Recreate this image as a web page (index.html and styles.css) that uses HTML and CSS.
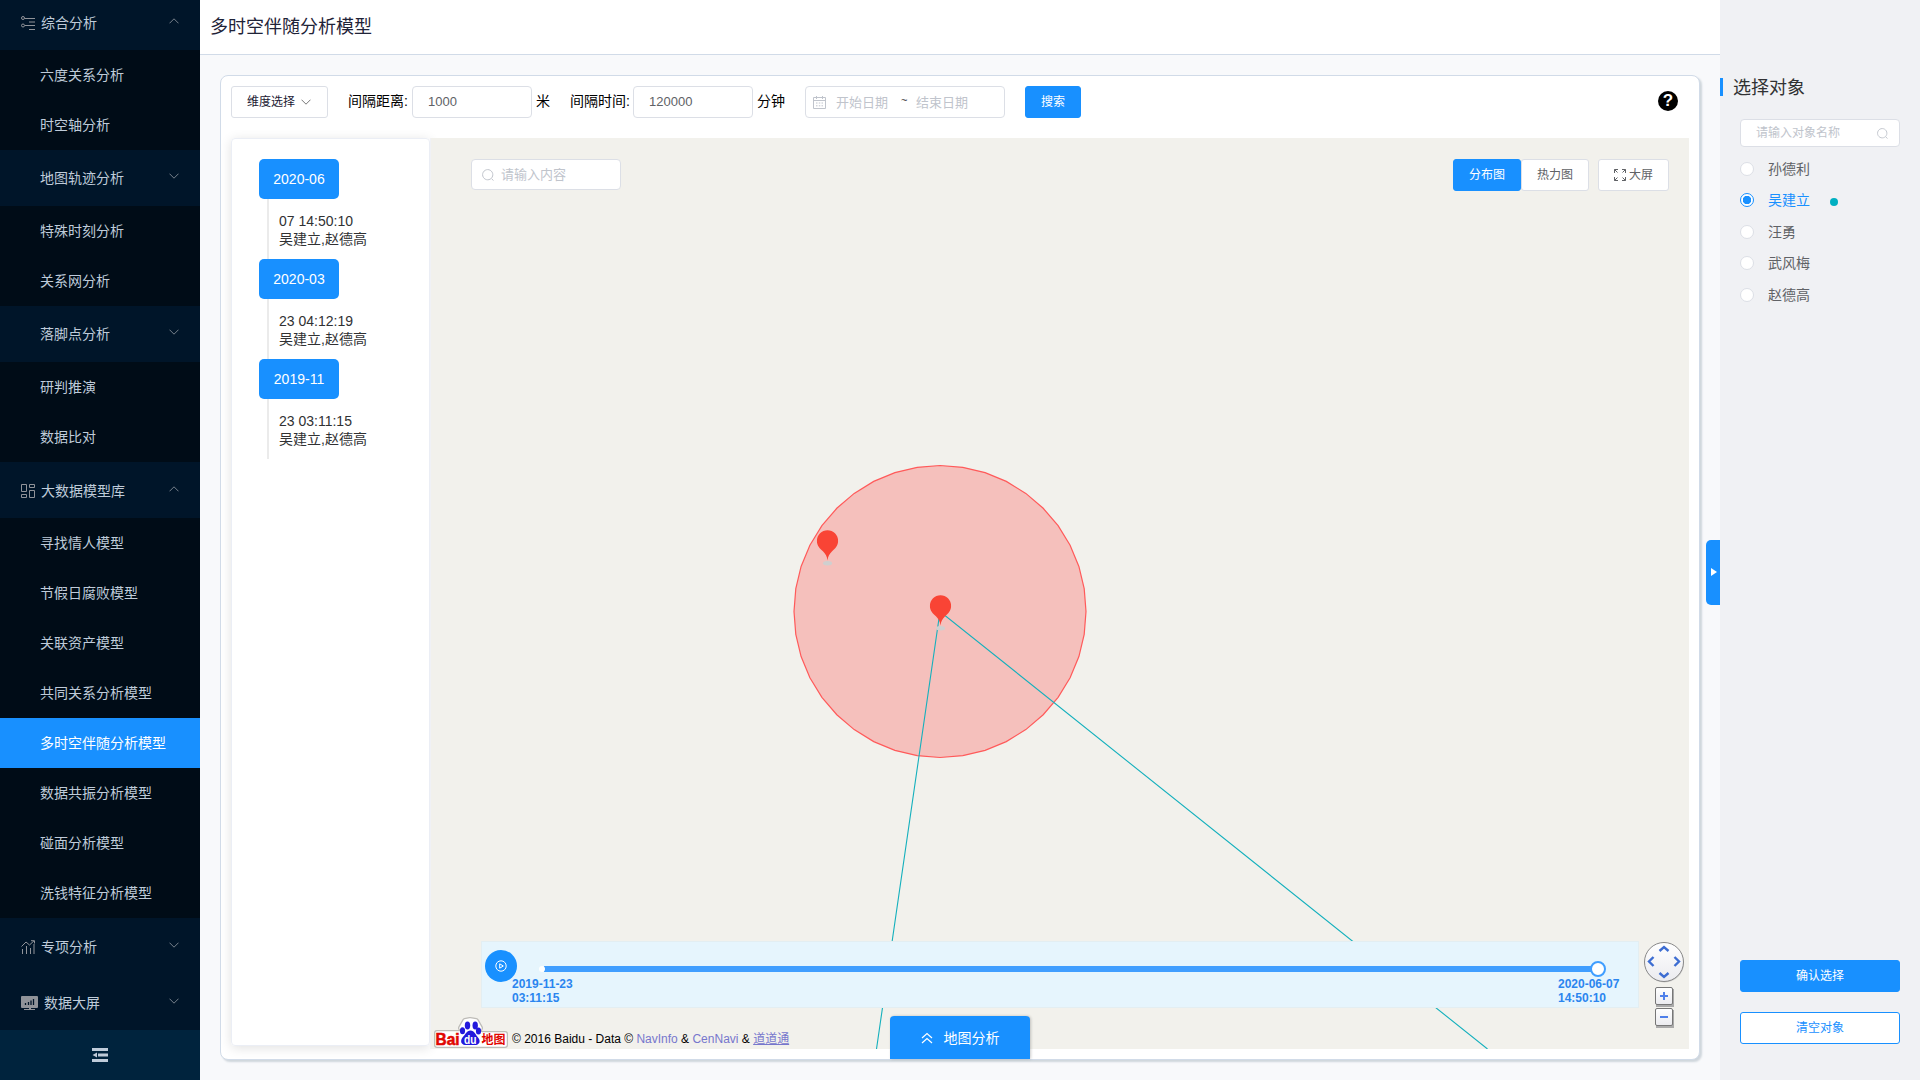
FILE: index.html
```html
<!DOCTYPE html>
<html lang="zh-CN">
<head>
<meta charset="utf-8">
<title>多时空伴随分析模型</title>
<link rel="stylesheet" href="styles.css">
</head>
<body>
<svg width="0" height="0" class="defs">
  <defs>
    <symbol id="down" viewBox="0 0 10 6"><path d="M.5.7 5 5.2 9.5.7" fill="none" stroke="currentColor"/></symbol>
    <symbol id="up" viewBox="0 0 10 6"><path d="M.5 5.3 5 .8 9.5 5.3" fill="none" stroke="currentColor"/></symbol>
    <symbol id="search" viewBox="0 0 12 12"><path d="M9.6 9.6 11.4 11.6M5.7.6a5.1 5.1 0 1 0 .01 0z" fill="none" stroke="currentColor" stroke-width="1"/></symbol>
    <symbol id="pin" viewBox="0 0 22 36"><ellipse cx="11" cy="33.2" rx="4.5" ry="2.2" fill="#d0cfcf"/><path d="M11 .2A10.6 10.8 0 0 0 .4 11c0 5 3.2 7.500 6 10.300 2.600 2.600 4.100 5 4.600 9.200.5-4.200 2-6.600 4.600-9.200 2.800-2.800 6-5.300 6-10.300A10.600 10.800 0 0 0 11 .2z" fill="#f94435"/></symbol>
  </defs>
</svg>
<div class="app">
  <aside class="sidebar">
    <nav class="menu">
      <div class="group first"><svg class="gicon" viewBox="0 0 14 14" fill="none" stroke="currentColor"><circle cx="2" cy="2" r="1.500"/><circle cx="2" cy="9.500" r="1.500"/><path d="M4 2.500h10M8 6h6M4 9.500h10M8 13.500h6"/></svg><span>综合分析</span><svg class="arrow"><use href="#up"/></svg></div>
      <div class="item">六度关系分析</div>
      <div class="item">时空轴分析</div>
      <div class="group sub"><span>地图轨迹分析</span><svg class="arrow"><use href="#down"/></svg></div>
      <div class="item">特殊时刻分析</div>
      <div class="item">关系网分析</div>
      <div class="group sub"><span>落脚点分析</span><svg class="arrow"><use href="#down"/></svg></div>
      <div class="item">研判推演</div>
      <div class="item">数据比对</div>
      <div class="group"><svg class="gicon" viewBox="0 0 14 14" fill="none" stroke="currentColor"><path d="M.5.500h5v7h-5zM8.500.500h5v3h-5zM.500 10.500h5v3h-5zM8.500 6.500h5v7h-5z"/></svg><span>大数据模型库</span><svg class="arrow"><use href="#up"/></svg></div>
      <div class="item">寻找情人模型</div>
      <div class="item">节假日腐败模型</div>
      <div class="item">关联资产模型</div>
      <div class="item">共同关系分析模型</div>
      <div class="item active">多时空伴随分析模型</div>
      <div class="item">数据共振分析模型</div>
      <div class="item">碰面分析模型</div>
      <div class="item">洗钱特征分析模型</div>
      <div class="group"><svg class="gicon" viewBox="0 0 14 14" fill="none" stroke="currentColor"><path d="M1.500 14V9M5.500 14V6M9.500 14V8M13 14V4M.500 6.500 5 2l3.500 3L13 .8M10 .7h3.500V3.500"/></svg><span>专项分析</span><svg class="arrow"><use href="#down"/></svg></div>
      <div class="group"><svg class="gicon wide" viewBox="0 0 17 14"><path d="M1 0h15q1 0 1 1v10q0 1-1 1H1q-1 0-1-1V1q0-1 1-1zM8 12h2v1h4v1H3v-1h5z" fill="#909399"/><path d="M4.500 9V7M7.500 9V6M10 9V4.500M12.500 9V3" stroke="#001529" stroke-width="1.300"/></svg><span>数据大屏</span><svg class="arrow"><use href="#down"/></svg></div>
    </nav>
    <div class="fold"><svg width="16" height="14" viewBox="0 0 16 14" fill="#bfcbd9"><path d="M0 0h16v3H0zM6 5.500h10v3H6zM0 11h16v3H0zM5 4.500v5L0.500 7z"/></svg></div>
  </aside>

  <main class="main">
    <header class="title">多时空伴随分析模型</header>
    <section class="card">
      <div class="toolbar">
        <div class="btn dimension">维度选择<svg class="caret"><use href="#down"/></svg></div>
        <label class="field distance">间隔距离:</label><div class="input">1000</div><span class="unit">米</span>
        <label class="field time">间隔时间:</label><div class="input">120000</div><span class="unit">分钟</span>
        <div class="dates"><svg width="13" height="13" viewBox="0 0 13 13" fill="none" stroke="currentColor"><path d="M.500 1.500h12v11H.500zM.500 4.500h12M3.500 0v3M9.500 0v3M3 7h1.500M5.800 7h1.500M8.500 7H10M3 9.800h1.500M5.800 9.800h1.500M8.500 9.800H10"/></svg><span class="from">开始日期</span><span class="tilde">~</span><span>结束日期</span></div>
        <div class="btn primary go">搜索</div>
        <div class="help">?</div>
      </div>
      <div class="content">
        <div class="timeline">
          <div class="month">2020-06</div>
          <div class="event">07 14:50:10<br>吴建立,赵德高</div>
          <div class="month">2020-03</div>
          <div class="event">23 04:12:19<br>吴建立,赵德高</div>
          <div class="month">2019-11</div>
          <div class="event">23 03:11:15<br>吴建立,赵德高</div>
        </div>
        <div class="map">
          <svg class="overlay" viewBox="430 138 1259 911">
            <polygon fill="#ff3b3b" fill-opacity=".27" stroke="#ff5a5a" stroke-width="1.200" points="940,465.500 962.800,467.300 985.100,472.600 1006.300,481.400 1025.800,493.400 1043.200,508.300 1058.100,525.700 1070.100,545.200 1078.900,566.400 1084.200,588.700 1086,611.500 1084.200,634.300 1078.900,656.600 1070.100,677.800 1058.100,697.300 1043.200,714.700 1025.800,729.600 1006.300,741.600 985.100,750.400 962.800,755.700 940,757.500 917.200,755.700 894.900,750.400 873.700,741.600 854.200,729.600 836.800,714.700 821.900,697.300 809.900,677.800 801.100,656.600 795.800,634.300 794,611.500 795.800,588.700 801.100,566.400 809.900,545.200 821.900,525.700 836.800,508.300 854.200,493.400 873.700,481.400 894.900,472.600 917.200,467.300"/>
            <path d="M876.500 1049 940 611.500l547.500 437.500" fill="none" stroke="#14b0bd" stroke-width="1.100"/>
            <use href="#pin" x="816.500" y="530" width="22" height="36"/>
            <use href="#pin" x="929.500" y="595" width="22" height="36"/>
          </svg>
          <div class="mapbar">
            <div class="mapsearch"><svg width="12" height="12"><use href="#search"/></svg>请输入内容</div>
            <div class="btn primary tab">分布图</div>
            <div class="btn tab">热力图</div>
            <div class="btn full"><svg width="12" height="12" viewBox="0 0 12 12" fill="none" stroke="currentColor"><path d="M.500 4V.500H4M.500.500l3 3M8 .500h3.500V4M11.500.500l-3 3M.500 8v3.500H4M.500 11.500l3-3M8 11.500h3.500V8M11.500 11.500l-3-3"/></svg>大屏</div>
          </div>
          <div class="player">
            <div class="play"><svg width="12" height="12" viewBox="0 0 12 12" fill="none" stroke="#fff"><circle cx="6" cy="6" r="5.200"/><path d="M4.700 3.800v4.400L8.300 6z"/></svg></div>
            <div class="track"></div>
            <div class="stamp">2019-11-23<br>03:11:15</div>
            <div class="stamp end">2020-06-07<br>14:50:10</div>
          </div>
          <div class="credits">
            <svg class="logo" width="76" height="32" viewBox="0 0 76 32">
              <g stroke-linejoin="round">
                <path id="plate" d="M3 16h23l4-1-3-4 4-7 5-1 6 1 4 7-2 5 4 1h23v11H3z" fill="#a9a7a3" stroke="#a9a7a3" stroke-width="6" opacity=".7"/>
                <path d="M3 16h23l4-1-3-4 4-7 5-1 6 1 4 7-2 5 4 1h23v11H3z" fill="#fff" stroke="#fff" stroke-width="3.500"/>
              </g>
              <g fill="#2319dc"><ellipse cx="33.500" cy="8.500" rx="2.700" ry="3.900"/><ellipse cx="41.200" cy="8.500" rx="2.700" ry="3.900"/><ellipse cx="28.500" cy="13.800" rx="2.600" ry="3.500"/><ellipse cx="44.500" cy="14" rx="2.600" ry="3.500"/><path d="M36.500 13.500c4 0 5 4 7.500 7 3 3.500 1.500 7-2 7.500H31c-4-.5-5-4-2.500-7.500 3-3 4-7 8-7z"/></g>
              <text x="1.500" y="27.500" class="bai" textLength="24" lengthAdjust="spacingAndGlyphs">Bai</text><text x="30" y="26.500" class="du" textLength="12.500" lengthAdjust="spacingAndGlyphs">du</text><text x="47.500" y="27" class="ditu" textLength="24">地图</text>
            </svg>
            <span>© 2016 Baidu - Data © <a>NavInfo</a> &amp; <a>CenNavi</a> &amp; <a class="line">道道通</a></span>
          </div>
          <svg class="navctl" width="44" height="92" viewBox="0 0 44 92">
            <defs><linearGradient id="g" x2="0" y2="1"><stop stop-color="#fff"/><stop offset="1" stop-color="#ebebef"/></linearGradient></defs>
            <circle cx="22.500" cy="23" r="19.500" fill="#bbb" opacity=".6"/>
            <circle cx="22" cy="22" r="19.500" fill="url(#g)" stroke="#888"/>
            <path d="m17.500 11 4.500-4 4.500 4M17.500 33l4.500 4 4.500-4M11.500 17l-4.500 4.500 4.500 4.500M32.500 17l4.500 4.500-4.500 4.500" fill="none" stroke="#3d6dd2" stroke-width="2.400"/>
            <path d="M14 49h18v18H14zM14 70h18v18H14z" fill="#aaa"/>
            <rect x="13.500" y="47.500" width="17" height="17" rx="1.500" fill="url(#g)" stroke="#777"/><rect x="13.500" y="68.500" width="17" height="17" rx="1.500" fill="url(#g)" stroke="#777"/>
            <path d="M18 56h8M22 52v8M18 77h8" stroke="#4f80ea" stroke-width="2"/>
          </svg>
        </div>
      </div>
      <div class="analysis"><svg width="12" height="12" viewBox="0 0 12 12" fill="none" stroke="#fff" stroke-width="1.200"><path d="M1 6l5-4.500L11 6M1 11l5-4.500 5 4.500"/></svg>地图分析</div>
    </section>
    <div class="toggle"></div>
  </main>

  <aside class="objects">
    <h2>选择对象</h2>
    <div class="osearch">请输入对象名称<svg width="11" height="11"><use href="#search"/></svg></div>
    <div class="radios">
      <div class="radio"><i></i>孙德利</div>
      <div class="radio on"><i></i>吴建立<b></b></div>
      <div class="radio"><i></i>汪勇</div>
      <div class="radio"><i></i>武风梅</div>
      <div class="radio"><i></i>赵德高</div>
    </div>
    <div class="btn primary wide">确认选择</div>
    <div class="btn outline wide">清空对象</div>
  </aside>
</div>
</body>
</html>
```
FILE: styles.css
```css
*, *::before, *::after { box-sizing: border-box; }
body { margin: 0; font: 14px/18px "Liberation Sans", "Noto Sans CJK SC", sans-serif; color: #303133; }
svg { flex: none; }
.defs { position: absolute; }
.app { display: flex; width: 1920px; height: 1080px; overflow: hidden; background: #f8f9fb; }

.sidebar { width: 200px; display: flex; flex-direction: column; background: #000c17; color: #bfcbd9; }
.menu { flex: 1; }
.item { height: 50px; line-height: 50px; padding-left: 40px; }
.item.active { background: #1890ff; color: #fff; }
.group { height: 56px; padding: 2px 21px 0; display: flex; align-items: center; background: #001529; }
.group.first { height: 50px; padding: 0 21px 4px; }
.group.sub { padding: 0 21px 0 40px; }
.gicon { width: 14px; height: 14px; margin-right: 6px; color: #909399; }
.gicon.wide { width: 17px; }
.arrow { width: 10px; height: 6px; margin-left: auto; margin-bottom: 4px; color: #77818c; }
.fold { height: 50px; background: #00233d; display: flex; align-items: center; justify-content: center; }

.main { position: relative; width: 1520px; display: flex; flex-direction: column; }
.title { height: 55px; padding: 14px 10px 0; font-size: 18px; line-height: 27px; background: #fff; border-bottom: 1px solid #d1dbe8; color: #1f2338; }
.card { position: relative; flex: 1; margin: 20px; background: #fff; border: 1px solid #d1dbe8; border-radius: 8px; box-shadow: 2px 2px 2px #cfd6dc; }
.toolbar { height: 62px; padding: 10px 10px 0; display: flex; color: #000; line-height: 31px; }
.btn { height: 32px; border: 1px solid #dcdfe6; border-radius: 3px; background: #fff; color: #606266; font-size: 12px; line-height: 30px; display: flex; justify-content: center; align-items: center; }
.primary { background: #1890ff; border-color: #1890ff; color: #fff; }
.outline { border-color: #1890ff; color: #1890ff; }
.dimension { width: 97px; padding-right: 1px; color: #1c2033; gap: 6px; }
.caret { width: 10px; height: 6px; color: #777; }
.field { width: 64px; }
.distance { margin-left: 20px; }
.time { width: 63px; margin-left: 20px; }
.input { width: 120px; height: 32px; padding-left: 15px; border: 1px solid #dcdfe6; border-radius: 4px; font-size: 13px; line-height: 30px; color: #606266; }
.unit { margin-left: 4px; }
.dates { width: 200px; height: 32px; margin-left: 20px; padding-left: 7px; border: 1px solid #dcdfe6; border-radius: 4px; display: flex; align-items: center; font-size: 13px; color: #c0c4cc; }
.from { margin-left: 10px; width: 65px; }
.tilde { width: 15px; margin-top: -3px; font-size: 11px; color: #303133; }
.go { width: 56px; margin-left: 20px; }
.help { width: 20px; height: 20px; margin: 5px 11px 0 auto; border-radius: 50%; background: #000; color: #fff; font-size: 17px; font-weight: bold; line-height: 20px; text-align: center; }
.content { display: flex; padding-left: 10px; }
.timeline { width: 199px; height: 908px; padding: 20px 27px; border: 1px solid #ebeef5; border-radius: 4px; box-shadow: 0 2px 12px rgba(0,0,0,.12); }
.month { width: 80px; height: 40px; border-radius: 5px; background: #1890ff; color: #fff; line-height: 40px; text-align: center; }
.event { height: 60px; margin-left: 8px; padding: 13px 0 0 10px; border-left: 2px solid #ebebeb; white-space: nowrap; }
.map { position: relative; width: 1259px; height: 911px; background: #f2f1ec; box-shadow: inset 1px 0 #f0f1f5; }
.overlay { position: absolute; left: 0; top: 0; width: 1259px; height: 911px; }
.mapbar { position: relative; display: flex; padding: 21px 20px 0 41px; }
.mapsearch { width: 150px; height: 31px; margin-right: auto; padding-left: 10px; display: flex; align-items: center; gap: 7px; border: 1px solid #dcdfe6; border-radius: 4px; background: #fff; font-size: 13px; color: #c0c4cc; }
.tab { width: 68px; }
.full { width: 71px; margin-left: 9px; gap: 3px; }
.player { position: absolute; left: 51px; top: 803px; width: 1158px; height: 67px; background: #e6f5fd; border: 1px solid #e3eef2; }
.play { position: absolute; left: 3px; top: 8px; width: 32px; height: 32px; border-radius: 50%; background: #1890ff; display: flex; align-items: center; justify-content: center; }
.track { position: absolute; left: 62px; top: 24px; width: 1054px; height: 6px; background: #409eff; }
.track::before { content: ""; position: absolute; left: -5px; width: 6px; height: 6px; border-radius: 50%; background: #fff; }
.track::after { content: ""; position: absolute; right: -8px; top: -5px; width: 16px; height: 16px; border: 2px solid #409eff; border-radius: 50%; background: #fff; }
.stamp { position: absolute; left: 30px; top: 35px; font-size: 12px; font-weight: bold; line-height: 14px; color: #2b85ef; }
.stamp.end { left: 1076px; }
.credits { position: absolute; left: 4px; top: 879px; display: flex; align-items: center; gap: 2px; font-size: 12px; color: #000; white-space: nowrap; }
.credits span { padding-top: 12px; line-height: 18px; }
.credits a { color: #7777cc; }
.credits .line { text-decoration: underline; }
.bai { font: bold 17px "Liberation Sans", sans-serif; fill: #e10601; stroke: #e10601; stroke-width: .6px; }
.du { font: bold 12px "Liberation Sans", sans-serif; fill: #fff; }
.ditu { font: bold 12px "Noto Sans CJK SC", sans-serif; fill: #e10601; }
.navctl { position: absolute; left: 1212px; top: 802px; }
.analysis { position: absolute; left: 669px; bottom: 0; width: 140px; height: 43px; border-radius: 4px 4px 0 0; background: #1890ff; color: #fff; display: flex; align-items: center; justify-content: center; gap: 11px; box-shadow: 1px 0 3px rgba(0,0,0,.2); }
.toggle { position: absolute; right: 0; top: 540px; width: 14px; height: 65px; border-radius: 5px 0 0 5px; background: #1890ff; }
.toggle::after { content: ""; position: absolute; left: 5px; top: 28px; border: 4.5px solid transparent; border-left: 6px solid #fff; border-right: 0; }

.objects { width: 200px; padding: 74px 20px 36px; display: flex; flex-direction: column; background: #f0f1f4; }
.objects h2 { margin: 4px 0 23px -20px; padding-left: 10px; border-left: 3px solid #1890ff; font-size: 18px; font-weight: normal; line-height: 20px; height: 18px; }
.osearch { height: 28px; padding: 0 11px 0 15px; display: flex; align-items: center; justify-content: space-between; border: 1px solid #dcdfe6; border-radius: 4px; background: #fff; font-size: 12px; color: #c0c4cc; }
.radios { padding-top: 6px; flex: 1; }
.radio { height: 31.5px; display: flex; align-items: center; color: #606266; }
.radio i { width: 14px; height: 14px; margin-right: 14px; border: 1px solid #dcdfe6; border-radius: 50%; background: #fff; }
.radio.on { color: #1890ff; }
.radio.on i { border-color: #1890ff; background: radial-gradient(circle, #1890ff 4px, #fff 4.5px); }
.radio b { width: 8px; height: 8px; margin: 4px 0 0 20px; border-radius: 50%; background: #00afc1; }
.wide.btn { width: 160px; }
.outline { margin-top: 20px; }
```
